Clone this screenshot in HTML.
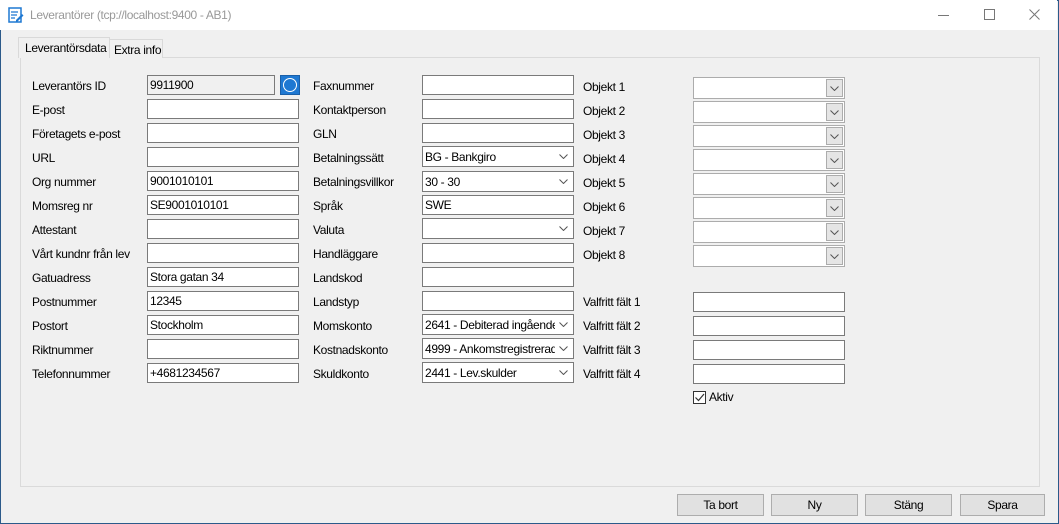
<!DOCTYPE html><html><head><meta charset="utf-8"><style>
*{box-sizing:border-box;margin:0;padding:0}
body{width:1059px;height:524px;background:#f0f0f0;font-family:"Liberation Sans",sans-serif;font-size:12px;letter-spacing:-0.35px;color:#000;position:relative;overflow:hidden}
.win{position:absolute;left:0;top:0;width:1059px;height:524px;border:1px solid #2b5a8a}
.title{position:absolute;left:0;top:0;width:1057px;height:30px;background:#fff}
.ttl{position:absolute;left:30px;top:8px;color:#999;font-size:12px}
.a{position:absolute;white-space:nowrap}
.in{position:absolute;height:20px;background:#fff;border:1px solid #7a7a7a;padding:2px 0 0 2px;white-space:nowrap;overflow:hidden}
.dd{position:absolute;background:#fff;border:1px solid #7a7a7a;padding:3px 0 0 2px;overflow:hidden;white-space:nowrap}
.ar{position:absolute;right:0;top:0;width:18px;height:19px;background:#fff}
.ar svg,.bt svg{position:absolute;left:4px;top:7px}
.cb{position:absolute;width:152px;height:22px;background:#fff;border:1px solid #acacac}
.cb .bt{position:absolute;right:1px;top:1px;width:17px;height:18px;background:#e5e5e5;border:1px solid #acacac}
.bt svg{left:3px;top:6px}
.btn{position:absolute;top:494px;height:22px;background:#e1e1e1;border:1px solid #adadad;text-align:center;line-height:20px}
</style></head><body>
<div class="win"></div>
<div class="title">
<svg style="position:absolute;left:8px;top:7px" width="16" height="16" viewBox="0 0 16 16"><rect x="1" y="1" width="12" height="14" fill="#fff" stroke="#1e78d2" stroke-width="1.5"/><path d="M3 5h7M3 8h6M3 11h4" stroke="#1e78d2" stroke-width="1.3"/><path d="M8 13l6-6 1.5 1.5-6 6H8z" fill="#1e78d2"/></svg>
<div class="ttl">Leverantörer (tcp://localhost:9400 - AB1)</div>
<div class="a" style="left:938px;top:15px;width:11px;border-top:1px solid #777"></div>
<div class="a" style="left:984px;top:9px;width:11px;height:11px;border:1px solid #777"></div>
<svg style="position:absolute;left:1029px;top:9px" width="11" height="11"><path d="M0.5 0.5l10 10M10.5 0.5l-10 10" stroke="#777" stroke-width="1"/></svg>
</div>
<div class="a" style="left:20px;top:57px;width:1020px;height:430px;border:1px solid #dadada;background:#f0f0f0"></div>
<div class="a" style="left:109px;top:39px;width:54px;height:19px;border:1px solid #d9d9d9;border-bottom:none;background:#f0f0f0;padding:3px 0 0 4px">Extra info</div>
<div class="a" style="left:18px;top:37px;width:92px;height:21px;border:1px solid #d9d9d9;border-bottom:none;background:#f0f0f0;padding:3px 0 0 6px">Leverantörsdata</div>
<div class="a" style="left:32px;top:79px">Leverantörs ID</div>
<div class="in" style="left:147px;top:75px;width:128px;background:#f0f0f0">9911900</div>
<div class="a" style="left:280px;top:75px;width:20px;height:20px;background:#1e78d2;border:1px solid #1a5fa8"><div style="position:absolute;left:2px;top:2px;width:14px;height:14px;border:1.5px solid #fff;border-radius:50%"></div></div>
<div class="a" style="left:32px;top:103px">E-post</div>
<div class="a" style="left:32px;top:127px">Företagets e-post</div>
<div class="a" style="left:32px;top:151px">URL</div>
<div class="a" style="left:32px;top:175px">Org nummer</div>
<div class="a" style="left:32px;top:199px">Momsreg nr</div>
<div class="a" style="left:32px;top:223px">Attestant</div>
<div class="a" style="left:32px;top:247px">Vårt kundnr från lev</div>
<div class="a" style="left:32px;top:271px">Gatuadress</div>
<div class="a" style="left:32px;top:295px">Postnummer</div>
<div class="a" style="left:32px;top:319px">Postort</div>
<div class="a" style="left:32px;top:343px">Riktnummer</div>
<div class="a" style="left:32px;top:367px">Telefonnummer</div>
<div class="in" style="left:147px;top:99px;width:152px"></div>
<div class="in" style="left:147px;top:123px;width:152px"></div>
<div class="in" style="left:147px;top:147px;width:152px"></div>
<div class="in" style="left:147px;top:171px;width:152px">9001010101</div>
<div class="in" style="left:147px;top:195px;width:152px">SE9001010101</div>
<div class="in" style="left:147px;top:219px;width:152px"></div>
<div class="in" style="left:147px;top:243px;width:152px"></div>
<div class="in" style="left:147px;top:267px;width:152px">Stora gatan 34</div>
<div class="in" style="left:147px;top:291px;width:152px">12345</div>
<div class="in" style="left:147px;top:315px;width:152px">Stockholm</div>
<div class="in" style="left:147px;top:339px;width:152px"></div>
<div class="in" style="left:147px;top:363px;width:152px">+4681234567</div>
<div class="a" style="left:313px;top:79px">Faxnummer</div>
<div class="a" style="left:313px;top:103px">Kontaktperson</div>
<div class="a" style="left:313px;top:127px">GLN</div>
<div class="a" style="left:313px;top:151px">Betalningssätt</div>
<div class="a" style="left:313px;top:175px">Betalningsvillkor</div>
<div class="a" style="left:313px;top:199px">Språk</div>
<div class="a" style="left:313px;top:223px">Valuta</div>
<div class="a" style="left:313px;top:247px">Handläggare</div>
<div class="a" style="left:313px;top:271px">Landskod</div>
<div class="a" style="left:313px;top:295px">Landstyp</div>
<div class="a" style="left:313px;top:319px">Momskonto</div>
<div class="a" style="left:313px;top:343px">Kostnadskonto</div>
<div class="a" style="left:313px;top:367px">Skuldkonto</div>
<div class="in" style="left:422px;top:75px;width:152px"></div>
<div class="in" style="left:422px;top:99px;width:152px"></div>
<div class="in" style="left:422px;top:123px;width:152px"></div>
<div class="dd" style="left:422px;top:146px;width:152px;height:21px">BG - Bankgiro<span class="ar"><svg width="9" height="5"><path d="M0.5 0.5l4 4 4-4" stroke="#555" fill="none"/></svg></span></div>
<div class="dd" style="left:422px;top:171px;width:152px;height:21px">30 - 30<span class="ar"><svg width="9" height="5"><path d="M0.5 0.5l4 4 4-4" stroke="#555" fill="none"/></svg></span></div>
<div class="in" style="left:422px;top:195px;width:152px">SWE</div>
<div class="dd" style="left:422px;top:218px;width:152px;height:21px"><span class="ar"><svg width="9" height="5"><path d="M0.5 0.5l4 4 4-4" stroke="#555" fill="none"/></svg></span></div>
<div class="in" style="left:422px;top:243px;width:152px"></div>
<div class="in" style="left:422px;top:267px;width:152px"></div>
<div class="in" style="left:422px;top:291px;width:152px"></div>
<div class="dd" style="left:422px;top:314px;width:152px;height:21px">2641 - Debiterad ingående<span class="ar"><svg width="9" height="5"><path d="M0.5 0.5l4 4 4-4" stroke="#555" fill="none"/></svg></span></div>
<div class="dd" style="left:422px;top:338px;width:152px;height:21px">4999 - Ankomstregistrerade<span class="ar"><svg width="9" height="5"><path d="M0.5 0.5l4 4 4-4" stroke="#555" fill="none"/></svg></span></div>
<div class="dd" style="left:422px;top:362px;width:152px;height:21px">2441 - Lev.skulder<span class="ar"><svg width="9" height="5"><path d="M0.5 0.5l4 4 4-4" stroke="#555" fill="none"/></svg></span></div>
<div class="a" style="left:583px;top:80px">Objekt 1</div>
<div class="a" style="left:583px;top:104px">Objekt 2</div>
<div class="a" style="left:583px;top:128px">Objekt 3</div>
<div class="a" style="left:583px;top:152px">Objekt 4</div>
<div class="a" style="left:583px;top:176px">Objekt 5</div>
<div class="a" style="left:583px;top:200px">Objekt 6</div>
<div class="a" style="left:583px;top:224px">Objekt 7</div>
<div class="a" style="left:583px;top:248px">Objekt 8</div>
<div class="cb" style="left:693px;top:77px"><div class="bt"><svg width="9" height="5"><path d="M0.5 0.5l4 4 4-4" stroke="#555" fill="none"/></svg></div></div>
<div class="cb" style="left:693px;top:101px"><div class="bt"><svg width="9" height="5"><path d="M0.5 0.5l4 4 4-4" stroke="#555" fill="none"/></svg></div></div>
<div class="cb" style="left:693px;top:125px"><div class="bt"><svg width="9" height="5"><path d="M0.5 0.5l4 4 4-4" stroke="#555" fill="none"/></svg></div></div>
<div class="cb" style="left:693px;top:149px"><div class="bt"><svg width="9" height="5"><path d="M0.5 0.5l4 4 4-4" stroke="#555" fill="none"/></svg></div></div>
<div class="cb" style="left:693px;top:173px"><div class="bt"><svg width="9" height="5"><path d="M0.5 0.5l4 4 4-4" stroke="#555" fill="none"/></svg></div></div>
<div class="cb" style="left:693px;top:197px"><div class="bt"><svg width="9" height="5"><path d="M0.5 0.5l4 4 4-4" stroke="#555" fill="none"/></svg></div></div>
<div class="cb" style="left:693px;top:221px"><div class="bt"><svg width="9" height="5"><path d="M0.5 0.5l4 4 4-4" stroke="#555" fill="none"/></svg></div></div>
<div class="cb" style="left:693px;top:245px"><div class="bt"><svg width="9" height="5"><path d="M0.5 0.5l4 4 4-4" stroke="#555" fill="none"/></svg></div></div>
<div class="a" style="left:583px;top:295px">Valfritt fält 1</div>
<div class="a" style="left:583px;top:319px">Valfritt fält 2</div>
<div class="a" style="left:583px;top:343px">Valfritt fält 3</div>
<div class="a" style="left:583px;top:367px">Valfritt fält 4</div>
<div class="in" style="left:693px;top:292px;width:152px"></div>
<div class="in" style="left:693px;top:316px;width:152px"></div>
<div class="in" style="left:693px;top:340px;width:152px"></div>
<div class="in" style="left:693px;top:364px;width:152px"></div>
<div class="a" style="left:693px;top:391px;width:13px;height:13px;border:1px solid #333;background:#fff"><svg width="11" height="11" style="position:absolute;left:0;top:0"><path d="M1.5 5.5l3 3 5.5-6.5" stroke="#333" stroke-width="1.2" fill="none"/></svg></div>
<div class="a" style="left:709px;top:390px">Aktiv</div>
<div class="btn" style="left:677px;width:87px">Ta bort</div>
<div class="btn" style="left:771px;width:87px">Ny</div>
<div class="btn" style="left:865px;width:87px">Stäng</div>
<div class="btn" style="left:960px;width:85px">Spara</div>
</body></html>
